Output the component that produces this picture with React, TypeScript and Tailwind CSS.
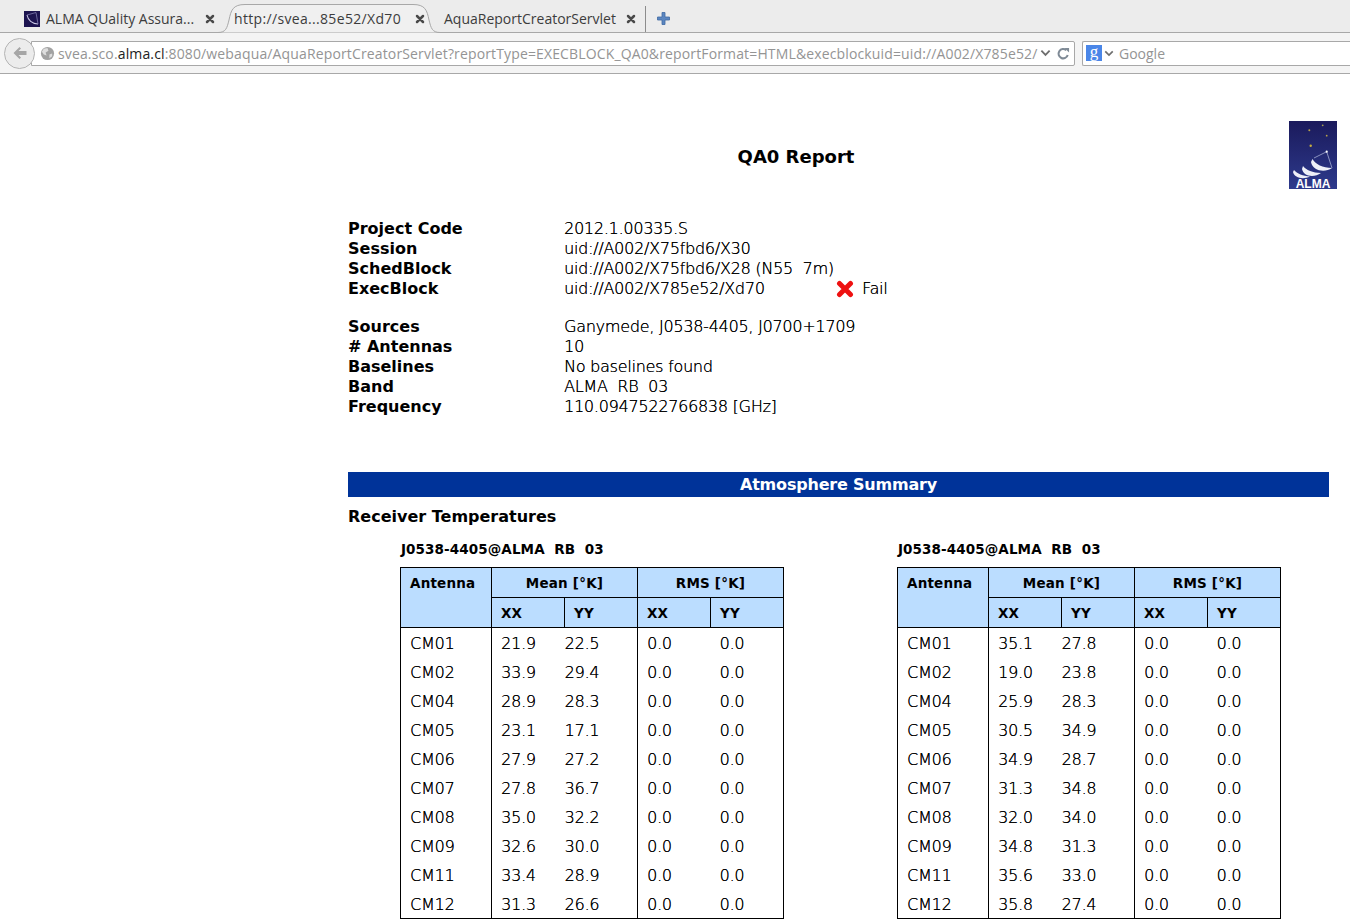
import React from 'react';

type Row = [string, string, string];

const leftRows: Row[] = [
  ['CM01', '21.9', '22.5'],
  ['CM02', '33.9', '29.4'],
  ['CM04', '28.9', '28.3'],
  ['CM05', '23.1', '17.1'],
  ['CM06', '27.9', '27.2'],
  ['CM07', '27.8', '36.7'],
  ['CM08', '35.0', '32.2'],
  ['CM09', '32.6', '30.0'],
  ['CM11', '33.4', '28.9'],
  ['CM12', '31.3', '26.6'],
];

const rightRows: Row[] = [
  ['CM01', '35.1', '27.8'],
  ['CM02', '19.0', '23.8'],
  ['CM04', '25.9', '28.3'],
  ['CM05', '30.5', '34.9'],
  ['CM06', '34.9', '28.7'],
  ['CM07', '31.3', '34.8'],
  ['CM08', '32.0', '34.0'],
  ['CM09', '34.8', '31.3'],
  ['CM11', '35.6', '33.0'],
  ['CM12', '35.8', '27.4'],
];

const light = 'font-extralight [text-shadow:0.2px_0_0_#000]';

const AlmaLogo = ({ className }: { className?: string }) => (
  <svg viewBox="0 0 48 68" className={className}>
    <defs>
      <linearGradient id="almaBg" x1="0" y1="0" x2="0" y2="1">
        <stop offset="0" stopColor="#1b1a5c" />
        <stop offset="1" stopColor="#2d3a8c" />
      </linearGradient>
    </defs>
    <rect width="48" height="68" fill="url(#almaBg)" />
    <circle cx="20.3" cy="9.3" r="1" fill="#b8a24a" />
    <circle cx="33.7" cy="4.3" r="0.9" fill="#a8a050" />
    <circle cx="37.7" cy="14.7" r="0.9" fill="#b8a24a" />
    <circle cx="21.7" cy="24.7" r="1.2" fill="#c8ae3e" />
    <path d="M25 37 L37.7 30.7 L43 47" fill="none" stroke="#cfd6ee" strokeWidth="0.6" />
    <circle cx="37.7" cy="30.7" r="1.1" fill="#fff" />
    <path d="M23.5 38 C26 43 34 47 43 47 C36 52 23.5 50 22 41 Z" fill="#eef0f8" />
    <path d="M14 45 C17 49 24 52 32 52 C25 57 14.5 55.5 13 48 Z" fill="#eef0f8" />
    <path d="M5 49 C8 52.5 14 55 21 55.5 C14 59 5.5 57 4 51 Z" fill="#eef0f8" />
    <text x="24" y="66.5" textAnchor="middle" fontSize="12" fill="#fff" fontFamily="'Liberation Sans', sans-serif" fontWeight="700">
      ALMA
    </text>
  </svg>
);

const Favicon = () => (
  <svg viewBox="0 0 16 16" className="h-[16px] w-[16px] shrink-0">
    <rect width="16" height="16" fill="#1d1450" />
    <path d="M3 4 C4 9 8 13 14 13" fill="none" stroke="#c9c6e4" strokeWidth="1.1" />
    <path d="M3 4 L12 1.5 M12 1.5 L14 13" fill="none" stroke="#8f8bbd" strokeWidth="0.7" />
  </svg>
);

const CloseX = () => (
  <svg viewBox="0 0 10 10" className="h-[10px] w-[10px] shrink-0">
    <path d="M2 2 L8 8 M8 2 L2 8" stroke="#4a4a4a" strokeWidth="2.5" strokeLinecap="round" />
  </svg>
);

const TabStrip = () => (
  <div className="flex h-[33px] items-stretch border-b border-[#a8a8a8] bg-[#ececec] font-['Open_Sans',sans-serif] text-[14px] text-[#3c3c3c]">
    <div className="flex w-[218px] items-center pl-[24px] pt-[5px]">
      <Favicon />
      <span className="ml-[6px] w-[159px] whitespace-nowrap">ALMA QUality Assura...</span>
      <CloseX />
    </div>
    <div className="relative flex w-[222px] items-center pl-[16px] pt-[5px]">
      <svg viewBox="0 0 222 33" className="absolute left-0 top-0 h-[33px] w-[222px]">
        <path
          d="M0 32.5 C8 32.5 9 28 11 20 C13 10 15 4.5 27 4.5 L195 4.5 C207 4.5 209 10 211 20 C213 28 214 32.5 222 32.5 Z"
          fill="#f0f0f0"
        />
        <path
          d="M0 32.5 C8 32.5 9 28 11 20 C13 10 15 4.5 27 4.5 L195 4.5 C207 4.5 209 10 211 20 C213 28 214 32.5 222 32.5"
          fill="none"
          stroke="#a8a8a8"
        />
      </svg>
      <span className="relative w-[181px] whitespace-nowrap tracking-[0.33px]">http://svea...85e52/Xd70</span>
      <span className="relative flex">
        <CloseX />
      </span>
    </div>
    <div className="flex w-[205px] items-center pl-[4px] pt-[5px]">
      <span className="w-[182px] whitespace-nowrap">AquaReportCreatorServlet</span>
      <CloseX />
    </div>
    <div className="mt-[6px] w-px bg-[#8c8c8c]" />
    <div className="flex items-center pl-[11px] pt-[5px]">
      <svg viewBox="0 0 13 13" className="h-[13px] w-[13px]">
        <path d="M5 0.5 H8 V5 H12.5 V8 H8 V12.5 H5 V8 H0.5 V5 H5 Z" fill="#5b86c0" stroke="#3f6aa3" strokeWidth="0.8" />
      </svg>
    </div>
  </div>
);

const Toolbar = () => (
  <div className="flex h-[41px] items-center border-b border-[#a8a8a8] bg-[#f4f4f4] pl-[4px] font-['Open_Sans',sans-serif] text-[14px]">
    <div className="relative z-10 flex h-[31px] w-[31px] items-center justify-center rounded-full border border-[#b4b4b4] bg-[#ececec]">
      <svg viewBox="0 0 16 14" className="h-[14px] w-[16px]">
        <path d="M7.5 1 L1.5 7 L7.5 13 L9 11.5 L6.5 9 H14.5 V5 H6.5 L9 2.5 Z" fill="#a6a6a6" />
      </svg>
    </div>
    <div className="-ml-[4px] flex h-[25px] w-[1044px] items-center rounded-r-[2px] border border-[#a8a8a8] bg-white pl-[8px] pr-[4px]">
      <svg viewBox="0 0 16 16" className="h-[15px] w-[15px] shrink-0">
        <circle cx="8" cy="8" r="7" fill="#a2a2a2" />
        <path d="M4 3 L8 2 L9 5 L6 7 L7 10 L4 9 L2 6 Z M10 9 L13 8 L13 11 L10 13 Z" fill="#dedede" />
      </svg>
      <div className="ml-[3px] flex-1 whitespace-nowrap tracking-[0.14px] text-[#949494]">
        svea.sco.<span className="text-[#222]">alma.cl</span>:8080/webaqua/AquaReportCreatorServlet?reportType=EXECBLOCK_QA0&amp;reportFormat=HTML&amp;execblockuid=uid://A002/X785e52/
      </div>
      <svg viewBox="0 0 12 10" className="ml-[3px] h-[10px] w-[11px] shrink-0">
        <path d="M1.5 2.5 L6 7 L10.5 2.5" fill="none" stroke="#6e6e6e" strokeWidth="2" />
      </svg>
      <svg viewBox="0 0 14 14" className="ml-[6px] h-[13px] w-[13px] shrink-0">
        <path d="M11.5 8.5 A5 5 0 1 1 10 3.5" fill="none" stroke="#7f8a96" strokeWidth="2.2" />
        <path d="M8 1 H13 V6 Z" fill="#7f8a96" />
      </svg>
    </div>
    <div className="ml-[7px] flex h-[25px] flex-1 items-center rounded-l-[2px] border border-r-0 border-[#a8a8a8] bg-white pl-[3px] text-[#949494]">
      <span className="flex h-[16px] w-[16px] items-center justify-center bg-[#4a86e8] pb-[3px] font-['Liberation_Serif',serif] text-[17px] leading-none text-white">
        g
      </span>
      <svg viewBox="0 0 12 10" className="ml-[2px] h-[9px] w-[10px]">
        <path d="M1.5 2.5 L6 7 L10.5 2.5" fill="none" stroke="#6e6e6e" strokeWidth="2" />
      </svg>
      <span className="ml-[5px]">Google</span>
    </div>
  </div>
);

const infoTop: [string, React.ReactNode][] = [
  ['Project Code', '2012.1.00335.S'],
  ['Session', 'uid://A002/X75fbd6/X30'],
  ['SchedBlock', 'uid://A002/X75fbd6/X28 (N55  7m)'],
  [
    'ExecBlock',
    <span className="flex items-center">
      <span className="w-[272px]">uid://A002/X785e52/Xd70</span>
      <svg viewBox="0 0 18 18" className="h-[18px] w-[18px]">
        <path d="M3.5 3.5 L14.5 14.5 M14.5 3.5 L3.5 14.5" stroke="#ee1111" strokeWidth="5" strokeLinecap="round" />
      </svg>
      <span className="ml-[8px]">Fail</span>
    </span>,
  ],
];

const infoBottom: [string, React.ReactNode][] = [
  ['Sources', 'Ganymede, J0538-4405, J0700+1709'],
  ['# Antennas', '10'],
  ['Baselines', 'No baselines found'],
  ['Band', 'ALMA  RB  03'],
  ['Frequency', '110.0947522766838 [GHz]'],
];

const InfoBlock = ({ rows }: { rows: [string, React.ReactNode][] }) => (
  <div className="flex flex-col">
    {rows.map(([label, value]) => (
      <div key={label} className="flex h-[20px] items-center leading-[20px]">
        <div className="w-[216px] font-bold">{label}</div>
        <div className={`whitespace-pre tracking-[-0.25px] ${light}`}>{value}</div>
      </div>
    ))}
  </div>
);

const TempTable = ({ rows }: { rows: Row[] }) => (
  <div className="w-[384px]">
    <div className="mb-[8px] h-[20px] whitespace-pre pl-px text-[13.5px] font-bold leading-[20px] tracking-[0.1px]">J0538-4405@ALMA  RB  03</div>
    <table className="w-[384px] table-fixed border-collapse border border-black text-[16px]">
      <colgroup>
        <col className="w-[91px]" />
        <col className="w-[73px]" />
        <col className="w-[73px]" />
        <col className="w-[73px]" />
        <col className="w-[73px]" />
      </colgroup>
      <thead className="bg-[#bbddff] text-[13.5px] tracking-[0.2px]">
        <tr className="h-[30px]">
          <th rowSpan={2} className="border-r border-black px-[9px] pt-[5px] text-left align-top font-bold">Antenna</th>
          <th colSpan={2} className="border-r border-b border-black pt-[2px] text-center font-bold">Mean [°K]</th>
          <th colSpan={2} className="border-b border-black pt-[2px] text-center font-bold">RMS [°K]</th>
        </tr>
        <tr className="h-[30px] border-b border-black">
          <th className="border-r border-black pl-[9px] pt-[2px] text-left font-bold">XX</th>
          <th className="border-r border-black pl-[9px] pt-[2px] text-left font-bold">YY</th>
          <th className="border-r border-black pl-[9px] pt-[2px] text-left font-bold">XX</th>
          <th className="pl-[9px] pt-[2px] text-left font-bold">YY</th>
        </tr>
      </thead>
      <tbody className={`tracking-[-0.2px] ${light}`}>
        {rows.map(([ant, xx, yy]) => (
          <tr key={ant} className="h-[29px] last:h-[30px]">
            <td className="border-r border-black pl-[9px] pt-[3px]">{ant}</td>
            <td className="pl-[9px] pt-[3px]">{xx}</td>
            <td className="border-r border-black pt-[3px]">{yy}</td>
            <td className="pl-[9px] pt-[3px]">0.0</td>
            <td className="pl-[9px] pt-[3px]">0.0</td>
          </tr>
        ))}
      </tbody>
    </table>
  </div>
);

const App: React.FC = () => {
  return (
    <div className="h-[920px] overflow-hidden bg-white font-['DejaVu_Sans',sans-serif] text-[16px] text-black">
      <TabStrip />
      <Toolbar />
      <div className="flex pr-[13px] pt-[47px]">
        <div className="flex-1 pl-[303px] pt-[25px] text-center text-[18px] font-bold leading-[22px]">QA0 Report</div>
        <AlmaLogo className="h-[68px] w-[48px]" />
      </div>
      <div className="pl-[348px] pr-[21px]">
        <div className="mt-[30px]">
          <InfoBlock rows={infoTop} />
        </div>
        <div className="mt-[18px]">
          <InfoBlock rows={infoBottom} />
        </div>
        <div className="mt-[55px] h-[25px] bg-[#003399] text-center font-bold leading-[25px] tracking-[-0.2px] text-white">Atmosphere Summary</div>
        <div className="mt-[10px] h-[20px] font-bold leading-[20px]">Receiver Temperatures</div>
        <div className="ml-[52px] mt-[12px] flex gap-[113px]">
          <TempTable rows={leftRows} />
          <TempTable rows={rightRows} />
        </div>
      </div>
    </div>
  );
};

export default App;
